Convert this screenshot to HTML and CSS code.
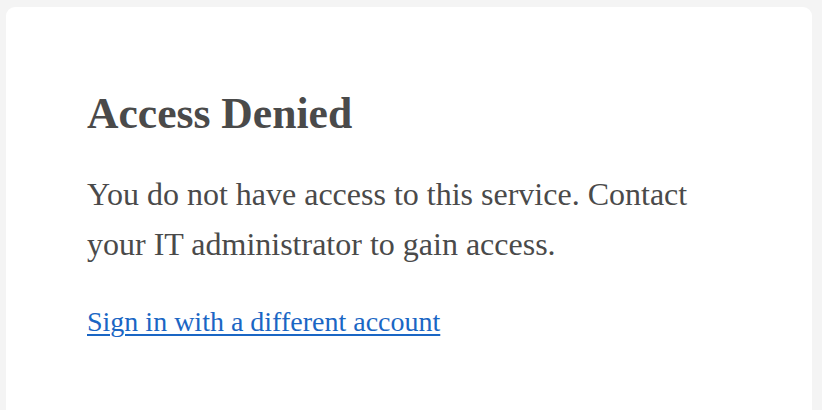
FILE: index.html
```html
<!DOCTYPE html>
<html lang="en">
<head>
<meta charset="utf-8">
<title>Access Denied</title>
<link rel="stylesheet" href="styles.css">
</head>
<body>
<main class="card">
  <h1 class="title">Access Denied</h1>
  <p class="message">You do not have access to this service. Contact your IT administrator to gain access.</p>
  <a class="switch-link" href="#">Sign in with a different account</a>
</main>
</body>
</html>
```

FILE: styles.css
```css
html, body {
  margin: 0;
  padding: 0;
  background: #f4f4f4;
  height: 100%;
  overflow: hidden;
}
body {
  display: flex;
  flex-direction: column;
  padding: 7px 10px 0 6px;
  box-sizing: border-box;
  font-family: "Liberation Serif", "Times New Roman", serif;
  color: #4a4a4a;
}
.card {
  flex: 1;
  display: flex;
  flex-direction: column;
  align-items: flex-start;
  background: #ffffff;
  border-radius: 9px 9px 0 0;
  padding: 80px 81px 0 81px;
  box-sizing: border-box;
}
.title {
  margin: 0;
  font-size: 43.6px;
  line-height: 52px;
  font-weight: bold;
  color: #4a4a4a;
}
.message {
  margin: 30px 0 0 0;
  font-size: 32px;
  line-height: 50px;
  max-width: 620px;
}
.switch-link {
  display: inline-block;
  margin-top: 33px;
  font-size: 28px;
  line-height: 40px;
  color: #1a66c4;
  text-decoration: underline;
  text-decoration-thickness: 2px;
  text-underline-offset: 3px;
}
```
